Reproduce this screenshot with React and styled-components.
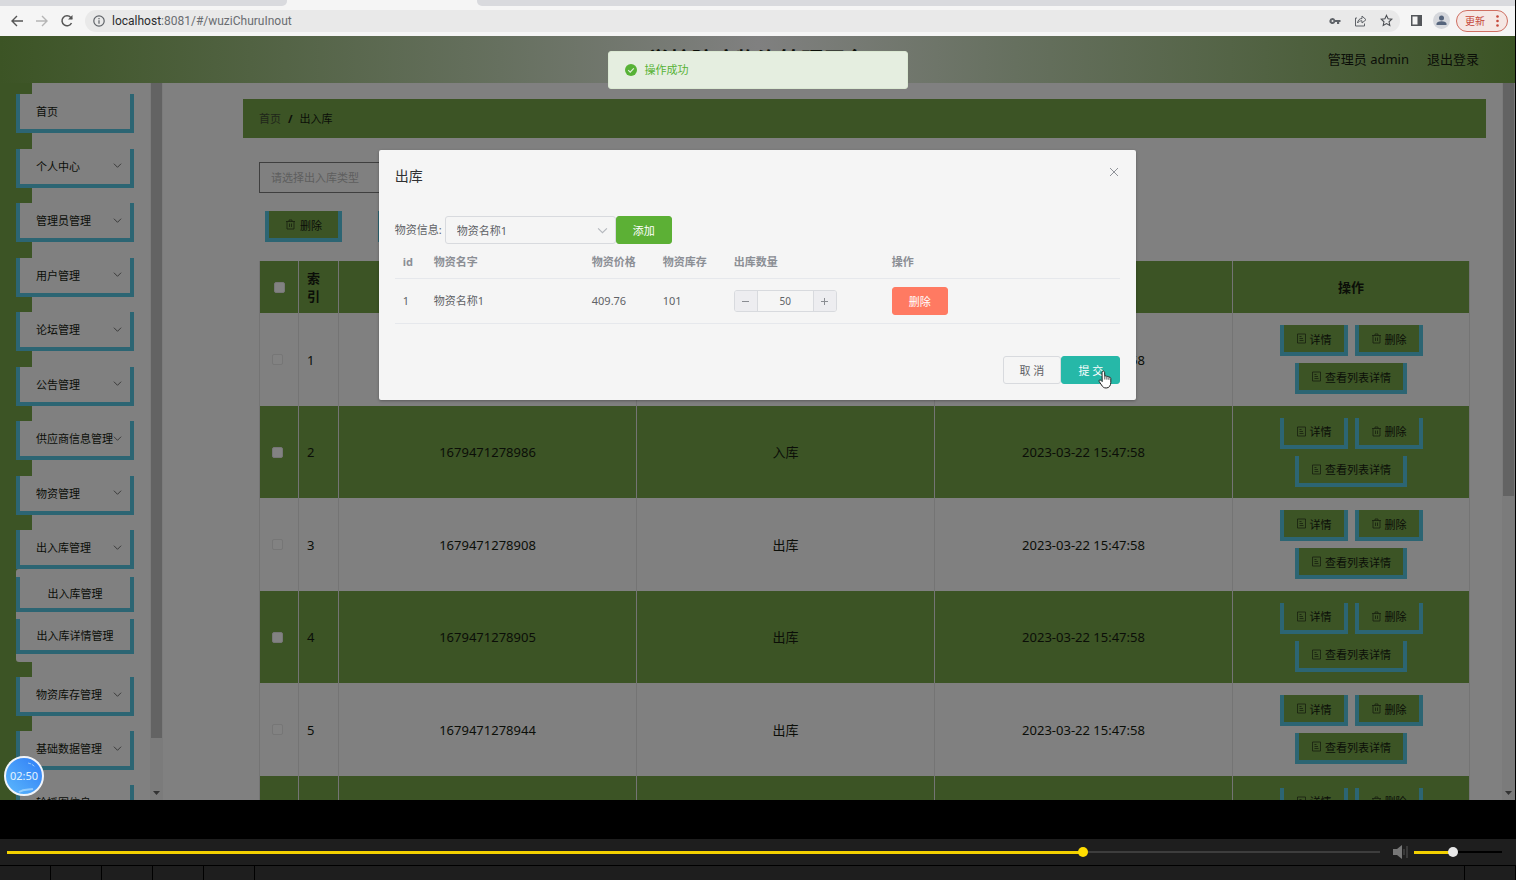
import React, { useState } from "react";
import styled, { createGlobalStyle } from "styled-components";

const Colour = {
  page: "#808080",
  green: "#3c5425",
  blue: "#2c6573",
  ink: "#0b0e08",
  line: "#747474",
  paper: "#f5f5f5",
};

const topMenu = [
  { name: "首页", leaf: true },
  { name: "个人中心" },
  { name: "管理员管理" },
  { name: "用户管理" },
  { name: "论坛管理" },
  { name: "公告管理" },
  { name: "供应商信息管理" },
  { name: "物资管理" },
  { name: "出入库管理" },
];
const subMenu = ["出入库管理", "出入库详情管理"];
const bottomMenu = [
  { name: "物资库存管理" },
  { name: "基础数据管理" },
  { name: "轮播图信息", leaf: true },
];

const records = [
  { id: 1, code: "1679471278995", type: "出库", time: "2023-03-22 15:47:58" },
  { id: 2, code: "1679471278986", type: "入库", time: "2023-03-22 15:47:58" },
  { id: 3, code: "1679471278908", type: "出库", time: "2023-03-22 15:47:58" },
  { id: 4, code: "1679471278905", type: "出库", time: "2023-03-22 15:47:58" },
  { id: 5, code: "1679471278944", type: "出库", time: "2023-03-22 15:47:58" },
  { id: 6, code: "1679471278932", type: "入库", time: "2023-03-22 15:47:58" },
];

const Chevron = ({ size = 9 }) => (
  <svg width={size} height={size} viewBox="0 0 10 10" fill="none" stroke="currentColor" strokeWidth="1">
    <path d="M1 3l4 4 4-4" />
  </svg>
);

const TrashIcon = () => (
  <svg width="11" height="11" viewBox="0 0 11 11" fill="none" stroke="currentColor" strokeWidth="0.8" opacity="0.75">
    <path d="M1 2.5h9M4 2.5V1h3v1.500M2 2.500v7.500h7V2.500M4.500 4.500v3.500M6.500 4.500v3.500" />
  </svg>
);

const TicketIcon = () => (
  <svg width="11" height="11" viewBox="0 0 11 11" fill="none" stroke="currentColor" strokeWidth="0.8" opacity="0.75">
    <path d="M1.500 1h8v9h-8zM3.500 3.500h2M3.500 5.500h3.500M3.500 7.500h4" />
  </svg>
);

const MenuItem = ({ item }) => (
  <MenuButton type="button">
    {item.name}
    {!item.leaf && <Chevron />}
  </MenuButton>
);

const BrowserBar = () => (
  <>
    <TabStrip>
      <div className="idle first" />
      <div className="active" />
      <div className="idle last" />
    </TabStrip>
    <Toolbar>
      <IconButton type="button" aria-label="后退">
        <svg width="14" height="14" viewBox="0 0 14 14" fill="none" stroke="#555" strokeWidth="1.4">
          <path d="M13 7H2M7 2L2 7l5 5" />
        </svg>
      </IconButton>
      <IconButton type="button" aria-label="前进">
        <svg width="14" height="14" viewBox="0 0 14 14" fill="none" stroke="#b5b5b5" strokeWidth="1.4">
          <path d="M1 7h11M7 2l5 5-5 5" />
        </svg>
      </IconButton>
      <IconButton type="button" aria-label="刷新">
        <svg width="14" height="14" viewBox="0 0 14 14" fill="none" stroke="#555" strokeWidth="1.500">
          <path d="M11.500 9A5 5 0 1 1 10.800 3.500L12 4.800" />
          <path d="M12.500 1v4.500H8z" fill="#555" stroke="none" />
        </svg>
      </IconButton>
      <Address>
        <svg width="12" height="12" viewBox="0 0 12 12" fill="none" stroke="#5f6368" strokeWidth="1.200">
          <circle cx="6" cy="6" r="5.200" />
          <path d="M6 5.200v3.600M6 3v1.200" />
        </svg>
        <p className="url">
          <b>localhost</b>:8081/#/wuziChuruInout
        </p>
        <div className="tools">
          <svg width="12" height="12" viewBox="0 0 12 12">
            <path
              d="M3.500 3a3 3 0 1 0 2.700 4.100H8V9h2.200V7.100H11.500V4.900H6.200A3 3 0 0 0 3.500 3zm0 2a1 1 0 1 1 0 2 1 1 0 0 1 0-2z"
              fill="#5f6368"
              fillRule="evenodd"
            />
          </svg>
          <svg width="13" height="13" viewBox="0 0 13 13" fill="none" stroke="#5f6368" strokeWidth="1">
            <path d="M3 4H1.500v8h9V9.500M3.500 9C4 6 5.500 4.500 8 4.500V2l4 3.700L8 9V6.800C6 6.800 4.700 7.300 3.500 9z" />
          </svg>
          <svg width="13" height="13" viewBox="0 0 24 24" fill="none" stroke="#4a4d52" strokeWidth="2">
            <path d="M12 2.500l2.900 6.300 6.900.8-5.100 4.700 1.400 6.800L12 17.700l-6.100 3.400 1.400-6.800L2.200 9.600l6.900-.8z" />
          </svg>
        </div>
      </Address>
      <svg width="11" height="11" viewBox="0 0 11 11">
        <path d="M0 0h11v11H0zM1.500 1.500v8h5v-8z" fill="#54575b" fillRule="evenodd" />
      </svg>
      <Avatar>
        <svg width="11" height="11" viewBox="0 0 11 11" fill="#55647c">
          <circle cx="5.500" cy="3" r="2.500" />
          <path d="M0.500 10V8.800C0.500 7 4 6.300 5.500 6.300s5 .7 5 2.500V10z" />
        </svg>
      </Avatar>
      <UpdateButton type="button">
        更新
        <svg width="3" height="12" viewBox="0 0 3 12" fill="#c5483a">
          <circle cx="1.500" cy="1.500" r="1.300" />
          <circle cx="1.500" cy="6" r="1.300" />
          <circle cx="1.500" cy="10.500" r="1.300" />
        </svg>
      </UpdateButton>
    </Toolbar>
  </>
);

const Sidebar = () => (
  <Side>
    <nav>
      <MenuGroup $tall>
        {topMenu.map((item) => (
          <MenuItem key={item.name} item={item} />
        ))}
      </MenuGroup>
      <SubMenu>
        {subMenu.map((name) => (
          <SubItem key={name} type="button">
            {name}
          </SubItem>
        ))}
      </SubMenu>
      <MenuGroup>
        {bottomMenu.map((item) => (
          <MenuItem key={item.name} item={item} />
        ))}
      </MenuGroup>
    </nav>
    <ScrollBar $thumb="92%">
      <i />
      <svg width="7" height="4" viewBox="0 0 7 4" fill="#333">
        <path d="M0 0h7L3.500 4z" />
      </svg>
    </ScrollBar>
  </Side>
);

const RecordTable = () => (
  <DataTable>
    <colgroup>
      <col className="check" />
      <col className="index" />
      <col />
      <col />
      <col />
      <col className="actions" />
    </colgroup>
    <thead>
      <tr>
        <th>
          <input type="checkbox" aria-label="全选" />
        </th>
        <th className="left">索引</th>
        <th />
        <th />
        <th />
        <th>操作</th>
      </tr>
    </thead>
    <tbody>
      {records.map((row) => (
        <tr key={row.id}>
          <td className="pick">
            <input type="checkbox" aria-label={`选择 ${row.id}`} />
          </td>
          <td className="left">{row.id}</td>
          <td>{row.code}</td>
          <td>{row.type}</td>
          <td>{row.time}</td>
          <td>
            <Actions>
              <GreenButton type="button">
                <TicketIcon />
                详情
              </GreenButton>
              <GreenButton type="button">
                <TrashIcon />
                删除
              </GreenButton>
              <GreenButton type="button">
                <TicketIcon />
                查看列表详情
              </GreenButton>
            </Actions>
          </td>
        </tr>
      ))}
    </tbody>
  </DataTable>
);

const OutDialog = () => {
  const [count, setCount] = useState(50);
  return (
    <Mask>
      <Dialog role="dialog" aria-labelledby="dialog-title">
        <header>
          <h2 id="dialog-title">出库</h2>
          <button type="button" aria-label="关闭">
            <svg width="10" height="10" viewBox="0 0 10 10" stroke="#909399" strokeWidth="1">
              <path d="M1 1l8 8M9 1L1 9" />
            </svg>
          </button>
        </header>
        <PickRow>
          <label htmlFor="goods">物资信息:</label>
          <SelectBox>
            <select id="goods" defaultValue="1">
              <option value="1">物资名称1</option>
            </select>
            <Chevron size={11} />
          </SelectBox>
          <ElButton type="button" $bg="#5cb035">
            添加
          </ElButton>
        </PickRow>
        <GoodsTable>
          <colgroup>
            <col className="id" />
            <col className="wide" />
            <col className="narrow" />
            <col className="narrow" />
            <col className="wide" />
            <col />
          </colgroup>
          <thead>
            <tr>
              <th>id</th>
              <th>物资名字</th>
              <th>物资价格</th>
              <th>物资库存</th>
              <th>出库数量</th>
              <th>操作</th>
            </tr>
          </thead>
          <tbody>
            <tr>
              <td>1</td>
              <td>物资名称1</td>
              <td>409.76</td>
              <td>101</td>
              <td>
                <Stepper>
                  <button type="button" aria-label="减少" onClick={() => setCount(count - 1)}>
                    <svg width="7" height="7" viewBox="0 0 7 7" stroke="#8a8d92">
                      <path d="M0 3.500h7" />
                    </svg>
                  </button>
                  <input
                    aria-label="出库数量"
                    value={count}
                    onChange={(e) => setCount(Number(e.target.value) || 0)}
                  />
                  <button type="button" aria-label="增加" onClick={() => setCount(count + 1)}>
                    <svg width="7" height="7" viewBox="0 0 7 7" stroke="#8a8d92">
                      <path d="M0 3.500h7M3.500 0v7" />
                    </svg>
                  </button>
                </Stepper>
              </td>
              <td>
                <ElButton type="button" $bg="#ff7a62">
                  删除
                </ElButton>
              </td>
            </tr>
          </tbody>
        </GoodsTable>
        <footer>
          <ElButton type="button">取 消</ElButton>
          <ElButton type="button" $bg="#26b8a8">
            提 交
            <Pointer width="14" height="19" viewBox="0 0 14 19">
              <path
                d="M4.500 1.500c.8-.8 2-.3 2.100.8l.2 4c.7-.8 1.900-.5 2.100.4.700-.600 1.800-.3 2 .6.900-.4 1.900.1 1.900 1.300v3.900c0 2.800-1.500 5.500-4.600 5.500-2.500 0-3.600-1.200-4.700-3L1.200 11.500c-.6-1.200.7-2.200 1.700-1.200l1.300 1.300-.2-8.600c0-.6.1-1.100.5-1.500z"
                fill="#fff"
                stroke="#222"
              />
              <path d="M6.800 6.300v3.200M8.900 7v2.600M10.900 7.600v2.200" stroke="#222" strokeWidth="0.800" />
            </Pointer>
          </ElButton>
        </footer>
      </Dialog>
    </Mask>
  );
};

const Player = () => {
  const [time, setTime] = useState(786);
  const [volume, setVolume] = useState(44);
  return (
    <PlayerBar>
      <Range
        className="seek"
        type="range"
        aria-label="进度"
        max="1000"
        value={time}
        onChange={(e) => setTime(e.target.value)}
        $rest="#3d3d3d"
        $knob="#ffdd00"
        style={{ "--done": `${time / 10}%` }}
      />
      <svg width="16" height="14" viewBox="0 0 16 14">
        <path d="M0 4h4l5-4v14l-5-4H0z" fill="#777" />
        <path d="M11 4v6M14 1v12" stroke="#555" />
      </svg>
      <Range
        className="volume"
        type="range"
        aria-label="音量"
        max="100"
        value={volume}
        onChange={(e) => setVolume(e.target.value)}
        $rest="#000"
        $knob="#e8e8e8"
        style={{ "--done": `${volume}%` }}
      />
    </PlayerBar>
  );
};

const App = () => {
  return (
    <Screen>
      <GlobalStyle />
      <BrowserBar />
      <Page>
        <TopHeader>
          <h1>学校防疫物资管理平台</h1>
          <div>
            <span>管理员 admin</span>
            <a href="#logout">退出登录</a>
          </div>
        </TopHeader>
        <Body>
          <Sidebar />
          <Main>
            <Breadcrumb>
              <a href="#home">首页</a>
              <b>/</b>
              <span>出入库</span>
            </Breadcrumb>
            <Content>
              <FilterInput placeholder="请选择出入库类型" aria-label="出入库类型" />
              <ButtonRow>
                <GreenButton type="button" $wide>
                  <TrashIcon />
                  删除
                </GreenButton>
                <GreenButton type="button" $wide>
                  <TicketIcon />
                  入库
                </GreenButton>
              </ButtonRow>
              <RecordTable />
            </Content>
          </Main>
          <ScrollBar $thumb="58%">
            <i />
            <svg width="7" height="4" viewBox="0 0 7 4" fill="#333">
              <path d="M0 0h7L3.500 4z" />
            </svg>
          </ScrollBar>
        </Body>
        <OutDialog />
        <Toast role="alert">
          <svg width="12" height="12" viewBox="0 0 12 12">
            <circle cx="6" cy="6" r="6" fill="#57b236" />
            <path d="M3.200 6.200l2 1.900 3.600-3.800" fill="none" stroke="#e5eee0" strokeWidth="1.100" />
          </svg>
          操作成功
        </Toast>
        <Timer>
          <svg width="36" height="36" viewBox="0 0 36 36" fill="none" stroke="#bfe6ff">
            <path d="M22 5c3 .5 5.500 2 7 4" strokeDasharray="3 1" opacity="0.7" />
            <path d="M13 34c5-3 9-2 14-3" opacity="0.6" strokeWidth="2" />
          </svg>
          <span>02:50</span>
        </Timer>
      </Page>
      <Gap />
      <Player />
      <Strip>
        <i />
        <i />
        <i />
        <i />
        <i />
        <i className="fill" />
        <i />
      </Strip>
    </Screen>
  );
};

export default App;

const GlobalStyle = createGlobalStyle`
  * {
    box-sizing: border-box;
  }
  body {
    margin: 0;
    background: #000;
    overflow: hidden;
    font-family: "Noto Sans", "Noto Sans CJK SC", sans-serif;
    font-size: 13px;
    line-height: 18px;
  }
  button, input, select {
    font-family: inherit;
    margin: 0;
  }
  button {
    padding: 0;
    border: 0;
    background: none;
  }
  a {
    color: inherit;
    text-decoration: none;
  }
  svg {
    flex: none;
  }
`;

const Screen = styled.div`
  display: flex;
  flex-direction: column;
  height: 100vh;
`;

const TabStrip = styled.div`
  display: flex;
  height: 6px;
  margin-right: 1px;
  background: ${Colour.paper};
  .idle {
    background: #d9dade;
  }
  .first {
    width: 287px;
    border-bottom-right-radius: 5px;
  }
  .active {
    width: 190px;
  }
  .last {
    flex: 1;
    border-bottom-left-radius: 5px;
  }
`;

const Toolbar = styled.div`
  display: flex;
  align-items: center;
  height: 30px;
  margin-right: 1px;
  padding: 0 7px 1px 10px;
  background: ${Colour.paper};
`;

const IconButton = styled.button`
  width: 25px;
  svg {
    display: block;
  }
`;

const Address = styled.div`
  display: flex;
  align-items: center;
  flex: 1;
  height: 22px;
  margin-right: 11px;
  padding: 0 7px 0 8px;
  border-radius: 11px;
  background: #e9e9e9;
  .url {
    flex: 1;
    margin: 0 0 0 7px;
    font-size: 12px;
    font-family: Roboto, sans-serif;
    color: #6a6d71;
  }
  .url b {
    font-weight: 400;
    color: #2b2c2e;
  }
  .tools {
    display: flex;
    align-items: center;
    gap: 13px;
  }
`;

const Avatar = styled.div`
  display: flex;
  align-items: center;
  justify-content: center;
  width: 17px;
  height: 17px;
  margin: 0 6px 0 11px;
  border-radius: 50%;
  background: #d5d7dc;
`;

const UpdateButton = styled.button`
  display: flex;
  align-items: center;
  justify-content: space-between;
  width: 52px;
  height: 22px;
  padding: 0 8px;
  border: 1px solid #cf6f62;
  border-radius: 11px;
  background: #f5e7e4;
  color: #c5483a;
  font-size: 10px;
`;

const Page = styled.div`
  position: relative;
  display: flex;
  flex-direction: column;
  flex: 1;
  min-height: 0;
  margin-right: 1px;
  overflow: hidden;
  background: ${Colour.page};
`;

const TopHeader = styled.header`
  display: grid;
  grid-template-columns: 1fr auto 1fr;
  align-items: center;
  height: 47px;
  flex: none;
  padding-bottom: 2px;
  color: ${Colour.ink};
  background: linear-gradient(90deg, ${Colour.green}, #66705f 33%, ${Colour.page} 50%, #66705f 67%, ${Colour.green});
  h1 {
    grid-column: 2;
    margin: 0;
    font-size: 22px;
    line-height: 24px;
  }
  div {
    display: flex;
    justify-content: flex-end;
    gap: 18px;
    padding-right: 36px;
  }
`;

const Body = styled.div`
  display: flex;
  flex: 1;
  min-height: 0;
`;

const Side = styled.aside`
  display: flex;
  justify-content: space-between;
  width: 163px;
  flex: none;
  background: linear-gradient(90deg, ${Colour.green} 32px, ${Colour.page} 32px);
  nav {
    width: 118px;
    margin-left: 16px;
    padding-top: 11px;
    overflow: hidden;
  }
`;

const MenuGroup = styled.div`
  display: flex;
  flex-direction: column;
  justify-content: space-between;
  height: ${(p) => (p.$tall ? "475px" : "147px")};
`;

const MenuButton = styled.button`
  display: flex;
  align-items: center;
  justify-content: space-between;
  height: 39px;
  flex: none;
  padding: 0 8px 1px 16px;
  border: solid ${Colour.blue};
  border-width: 0 4px 4px;
  background: ${Colour.page};
  color: ${Colour.ink};
  font-size: 11px;
  white-space: nowrap;
  svg {
    color: #333;
  }
`;

const SubMenu = styled.div`
  display: flex;
  flex-direction: column;
  gap: 7px;
  margin-bottom: 15px;
  padding: 8px 0;
  border-radius: 3px;
  background: ${Colour.page};
`;

const SubItem = styled.button`
  height: 35px;
  border: solid ${Colour.blue};
  border-width: 0 4px 4px;
  color: ${Colour.ink};
  font-size: 11px;
`;

const ScrollBar = styled.div`
  display: flex;
  flex-direction: column;
  align-items: center;
  justify-content: space-between;
  width: 13px;
  flex: none;
  padding-bottom: 5px;
  background: #7b7b7b;
  i {
    width: 11px;
    height: ${(p) => p.$thumb};
    background: #636363;
  }
`;

const Main = styled.main`
  flex: 1;
  min-width: 0;
  padding: 16px 16px 0 80px;
  overflow: hidden;
`;

const Breadcrumb = styled.div`
  display: flex;
  align-items: center;
  gap: 7px;
  height: 39px;
  padding: 0 16px;
  background: ${Colour.green};
  color: ${Colour.ink};
  font-size: 11px;
  a {
    color: #20261a;
  }
`;

const Content = styled.div`
  padding: 24px 16px 0;
`;

const FilterInput = styled.input`
  display: block;
  width: 180px;
  height: 31px;
  padding: 0 11px;
  border: 1px solid #3f3f3f;
  background: none;
  font-size: 11px;
  &::placeholder {
    color: #5e5e5e;
  }
`;

const ButtonRow = styled.div`
  display: flex;
  gap: 36px;
  padding: 18px 6px 19px;
`;

const GreenButton = styled.button`
  display: flex;
  align-items: center;
  gap: ${(p) => (p.$wide ? "4px" : "3px")};
  height: 31px;
  padding: 0 ${(p) => (p.$wide ? "16px" : "12px")};
  border: solid ${Colour.blue};
  border-width: 0 4px 4px;
  background: ${Colour.green};
  color: ${Colour.ink};
  font-size: 11px;
`;

const Actions = styled.div`
  display: flex;
  flex-wrap: wrap;
  justify-content: center;
  gap: 7px;
`;

const DataTable = styled.table`
  width: 100%;
  table-layout: fixed;
  border-spacing: 0;
  border-left: 1px solid ${Colour.line};
  color: ${Colour.ink};
  text-align: center;
  .check {
    width: 39px;
  }
  .index {
    width: 40px;
  }
  .actions {
    width: 237px;
  }
  th,
  td {
    padding: 0 8px;
    border-right: 1px solid ${Colour.line};
  }
  .left {
    text-align: left;
  }
  .pick {
    padding: 0 12px 0 8px;
  }
  th {
    height: 52px;
    background: ${Colour.green};
  }
  tbody tr {
    height: 93px;
  }
  tbody tr:nth-child(even) {
    height: 92px;
    background: ${Colour.green};
  }
  input {
    appearance: none;
    display: block;
    width: 11px;
    height: 11px;
    margin: 0 auto;
    border: 1px solid #767676;
    border-radius: 2px;
    background: #828282;
  }
`;

const Mask = styled.div`
  position: absolute;
  inset: 0;
  display: flex;
  align-items: flex-start;
  justify-content: center;
`;

const Dialog = styled.div`
  width: 50%;
  margin-top: 114px;
  padding: 16px;
  border-radius: 2px;
  background: ${Colour.paper};
  box-shadow: 0 1px 3px rgba(0, 0, 0, 0.3);
  header {
    display: flex;
    justify-content: space-between;
    height: 50px;
  }
  header button {
    align-self: flex-start;
    padding: 1px;
  }
  header svg {
    display: block;
  }
  h2 {
    margin: 0;
    color: #303133;
    font-size: 14px;
    font-weight: 400;
    line-height: 19px;
  }
  footer {
    display: flex;
    justify-content: flex-end;
    margin-top: 32px;
  }
`;

const PickRow = styled.div`
  display: flex;
  align-items: center;
  color: #606266;
  font-size: 11px;
`;

const SelectBox = styled.div`
  position: relative;
  width: 171px;
  margin-left: 3px;
  color: #b4b7bd;
  select {
    appearance: none;
    display: block;
    width: 100%;
    height: 28px;
    padding: 0 11px;
    border: 1px solid #d8dade;
    border-radius: 3px;
    background: none;
    color: #606266;
    font-size: 11px;
  }
  svg {
    position: absolute;
    top: 9px;
    right: 8px;
    pointer-events: none;
  }
`;

const ElButton = styled.button`
  position: relative;
  height: 28px;
  padding: 0 16px;
  border: 1px solid ${(p) => p.$bg || "#d8dade"};
  border-radius: 3px;
  background: ${(p) => p.$bg || "transparent"};
  color: ${(p) => (p.$bg ? "#fff" : "#606266")};
  font-size: 11px;
`;

const Pointer = styled.svg`
  position: absolute;
  right: 7px;
  bottom: -6px;
`;

const GoodsTable = styled.table`
  width: 100%;
  table-layout: fixed;
  border-spacing: 0;
  color: #606266;
  font-size: 11px;
  text-align: left;
  .id {
    width: 31px;
  }
  .wide {
    width: 158px;
  }
  .narrow {
    width: 71px;
  }
  th,
  td {
    padding: 0 8px;
    border-bottom: 1px solid #e6e8ec;
  }
  th {
    height: 35px;
    padding-top: 2px;
    color: #8c8f95;
  }
  td {
    height: 45px;
  }
`;

const Stepper = styled.div`
  display: flex;
  width: 103px;
  height: 22px;
  border: 1px solid #d8dade;
  border-radius: 3px;
  overflow: hidden;
  button {
    display: flex;
    align-items: center;
    justify-content: center;
    width: 22px;
    flex: none;
    background: #ededf0;
  }
  input {
    flex: 1;
    min-width: 0;
    padding: 0;
    border: solid #d8dade;
    border-width: 0 1px;
    background: none;
    color: #606266;
    font-size: 10px;
    text-align: center;
  }
`;

const Toast = styled.div`
  position: absolute;
  top: 15px;
  left: 50%;
  display: flex;
  align-items: center;
  gap: 8px;
  width: 300px;
  height: 38px;
  margin-left: -150px;
  padding: 0 16px;
  border: 1px solid #dbe9d3;
  border-radius: 3px;
  background: #e5eee0;
  color: #57b236;
  font-size: 11px;
`;

const Timer = styled.div`
  position: absolute;
  left: 4px;
  bottom: 4px;
  display: grid;
  place-items: center;
  width: 40px;
  height: 40px;
  border: 2px solid #f0f4fa;
  border-radius: 50%;
  background: linear-gradient(45deg, #5cb8fc, #2f7df6);
  color: #e3f3ff;
  font-size: 11px;
  svg,
  span {
    grid-area: 1 / 1;
  }
`;

const Gap = styled.div`
  height: 39px;
  flex: none;
`;

const PlayerBar = styled.div`
  display: flex;
  align-items: center;
  height: 26px;
  flex: none;
  padding: 0 14px 0 7px;
  background: #1e1e1e;
  .seek {
    flex: 1;
    margin-right: 13px;
  }
  .volume {
    width: 88px;
    margin-left: 5px;
  }
`;

const Range = styled.input`
  appearance: none;
  height: 10px;
  min-width: 0;
  background: linear-gradient(#f2d000, #f2d000) 0 4px / var(--done) 3px no-repeat,
    linear-gradient(${(p) => p.$rest}, ${(p) => p.$rest}) 0 4px / 100% 2px no-repeat;
  &::-webkit-slider-thumb {
    appearance: none;
    width: 10px;
    height: 10px;
    border-radius: 50%;
    background: ${(p) => p.$knob};
  }
`;

const Strip = styled.div`
  display: flex;
  height: 15px;
  flex: none;
  padding-top: 1px;
  i {
    width: 50px;
    margin-right: 1px;
    background: #1e1e1e;
  }
  .fill {
    flex: 1;
  }
`;
